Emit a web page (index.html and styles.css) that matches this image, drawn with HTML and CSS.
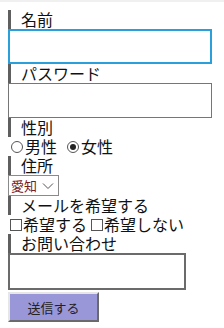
FILE: index.html
```html
<!DOCTYPE html>
<html lang="ja">
<head>
<meta charset="utf-8">
<link rel="stylesheet" href="styles.css">
</head>
<body>
<form class="form">
  <div class="label">名前</div>
  <input class="text text-focus" type="text">
  <div class="label">パスワード</div>
  <input class="text" type="password">
  <div class="label">性別</div>
  <div class="row">
    <span class="radio"></span><span class="opt opt-radio">男性</span>
    <span class="radio radio-on"></span><span class="opt">女性</span>
  </div>
  <div class="label">住所</div>
  <div class="select"><span class="select-val">愛知</span><svg class="chev" width="12" height="8" viewBox="0 0 12 8"><path d="M1 1.5 L6 6.5 L11 1.5" fill="none" stroke="#555" stroke-width="1"/></svg></div>
  <div class="label">メールを希望する</div>
  <div class="row">
    <span class="check"></span><span class="opt opt-check">希望する</span>
    <span class="check"></span><span class="opt">希望しない</span>
  </div>
  <div class="label">お問い合わせ</div>
  <textarea class="area"></textarea>
  <button class="btn" type="button">送信する</button>
</form>
</body>
</html>
```
FILE: styles.css
```css
html {
  border-top: 2px solid #f0f0f0;
  background: #fff;
}
body {
  margin: 8px;
  font-family: "Noto Sans CJK JP", "Noto Sans", sans-serif;
  color: #111;
}
.form {
  display: flex;
  flex-direction: column;
  align-items: flex-start;
}
.label {
  border-left: 3px solid #5f5f5f;
  padding-left: 10px;
  font-size: 16px;
  line-height: 19px;
  height: 19px;
  box-sizing: border-box;
}
.text {
  display: block;
  box-sizing: border-box;
  width: 204px;
  height: 35px;
  margin: 0;
  border: 1px solid #767676;
  outline: none;
  background: #fff;
}
.text-focus {
  border: 2px solid #2b9fd9;
}
.row {
  display: flex;
  align-items: center;
  height: 19px;
  font-size: 16px;
  line-height: 19px;
  padding-left: 2px;
}
.opt-radio {
  margin-right: 9px;
}
.opt-check {
  margin-right: 4px;
}
.radio {
  width: 12px;
  height: 12px;
  border: 1px solid #555;
  border-radius: 50%;
  box-sizing: border-box;
  margin-left: 1px;
  margin-right: 2px;
  position: relative;
}
.radio-on::after {
  content: "";
  position: absolute;
  left: 2px;
  top: 2px;
  width: 6px;
  height: 6px;
  border-radius: 50%;
  background: #222;
}
.check {
  width: 12px;
  height: 12px;
  border: 1px solid #555;
  box-sizing: border-box;
  margin-right: 1px;
}
.select {
  display: flex;
  align-items: center;
  box-sizing: border-box;
  width: 51px;
  height: 21px;
  border: 1px solid #8a8a8a;
  padding-left: 2px;
  font-size: 13px;
  line-height: 19px;
}
.select-val {
  color: #7a1c1c;
  flex: 1;
}
.chev {
  margin-right: 4px;
}
.area {
  display: block;
  box-sizing: border-box;
  width: 178px;
  height: 37px;
  margin: 0;
  border: 2px solid #6b6b6b;
  resize: none;
  outline: none;
}
.btn {
  margin-top: 2px;
  width: 91px;
  height: 30px;
  box-sizing: border-box;
  background: #9a97d8;
  border: 2px solid;
  border-color: #e6e6e6 #6a6a6a #6a6a6a #e6e6e6;
  font-family: "Noto Sans CJK JP", sans-serif;
  font-size: 13px;
  color: #222;
  padding: 0;
}
```
